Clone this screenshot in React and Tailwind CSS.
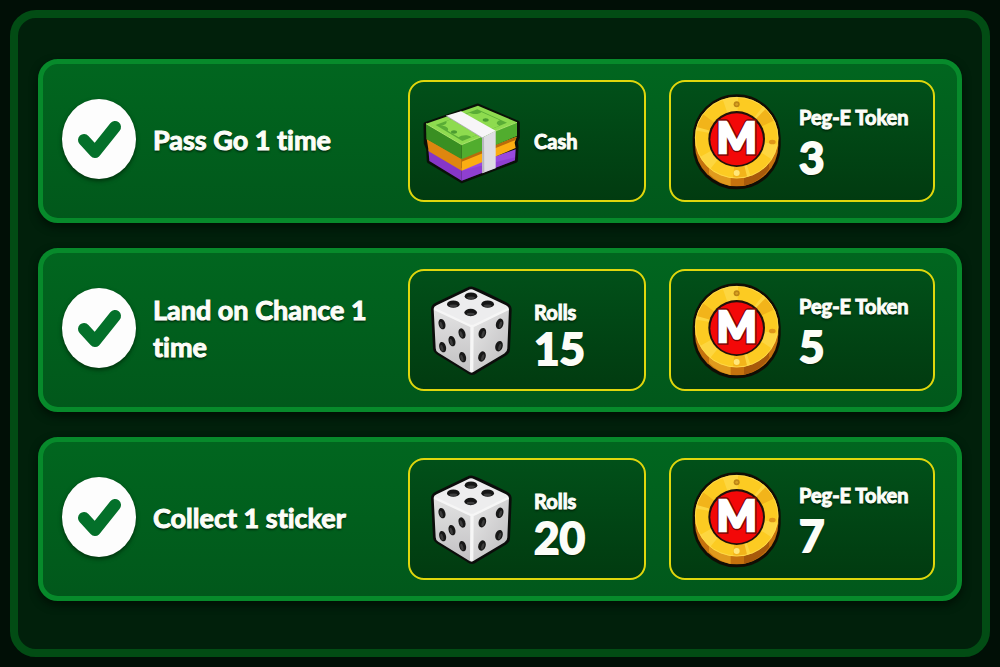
import React from 'react';

const TASKS = [
    { id: 'go', title: 'Pass Go 1 time', reward: { icon: CashIcon, label: 'Cash' }, tokens: 3 },
    { id: 'chance', title: 'Land on Chance 1 time', reward: { icon: DiceIcon, label: 'Rolls', amount: 15 }, tokens: 5 },
    { id: 'sticker', title: 'Collect 1 sticker', reward: { icon: DiceIcon, label: 'Rolls', amount: 20 }, tokens: 7 },
];

function CheckIcon() {
    return (
        <svg viewBox="0 0 74 84" className="w-[74px] h-[84px] shrink-0 overflow-visible drop-shadow-[0_2px_2px_rgba(0,20,0,0.6)]" role="img" aria-label="Completed">
            <ellipse cx="37" cy="40" rx="37" ry="40" fill="#fdfdfd" />
            <path d="M22 41 L33 53 L53 28" fill="none" stroke="#04702a" strokeWidth="12" strokeLinecap="round" strokeLinejoin="round" />
        </svg>
    );
}

function CashIcon() {
    return (
        <svg viewBox="42 30 288 246" className="w-24 h-[82px] overflow-visible" aria-hidden="true">
            <path d="M204 46 L324 98 L324 142 L318 154 L320 170 L318 212 L156 274 L56 214 L54 176 L47 160 L46 102 Z" fill="#091008" stroke="#091008" strokeWidth="11" strokeLinejoin="round" />
            {/* purple bundle */}
            <path d="M55 178 L155 235 L155 272 L58 213 Z" fill="#8636c7" />
            <path d="M155 235 L317 178 L315 211 L155 272 Z" fill="#9a49df" />
            <path d="M155 242 L155 272 L315 211 L315 202 Z" fill="#7a2fb8" opacity="0.35" />
            {/* orange bundle */}
            <path d="M50 146 L155 205 L155 242 L56 184 Z" fill="#df860f" />
            <path d="M155 205 L320 140 L314 158 L317 174 L155 242 Z" fill="#fbad12" />
            <path d="M155 205 L320 140 L317 150 L155 215 Z" fill="#b86b0b" />
            {/* green bundle */}
            <path d="M48 101 L155 164 L155 208 L49 147 Z" fill="#398f22" />
            <path d="M155 164 L321 97 L321 138 L155 208 Z" fill="#51ad2e" />
            <path d="M48 101 L204 47 L321 97 L155 164 Z" fill="#8edb4f" />
            <path d="M48 101 L155 164 L321 97" fill="none" stroke="#a9e66b" strokeWidth="3" />
            <path d="M77 105 L202 58 L291 98 L157 153 Z" fill="#5aad36" />
            <path d="M91 106 C107 106 112 99 109 93 L179 68 C188 74 207 74 214 66 L270 91 C257 95 258 103 268 107 L184 142 C175 133 153 135 146 142 L113 122 C119 115 107 108 91 106 Z" fill="#8edb4f" />
            <ellipse cx="132" cy="126" rx="9" ry="5" fill="#4c9c31" />
            <ellipse cx="227" cy="90" rx="9" ry="5" fill="#4c9c31" />
            {/* paper band */}
            <path d="M108 77 L153 64 L257 122 L216 143 Z" fill="#f7f5f8" />
            <path d="M108 77 L216 143" stroke="#9b9ba4" strokeWidth="2" />
            <path d="M216 143 L257 122 L257 235 L217 250 Z" fill="#dedce2" />
            <path d="M216 143 L222 140 L223 247 L217 250 Z" fill="#b8b7bf" />
        </svg>
    );
}

const TOP_PIPS = [[140, 48], [87, 72], [190, 72], [139, 97]];
const LEFT_PIPS = [[53, 132], [113, 160], [83, 183], [55, 201], [115, 231]];
const RIGHT_PIPS = [[226, 131], [174, 159], [224, 198], [173, 229]];

function DiceIcon() {
    return (
        <svg viewBox="20 18 246 266" className="w-[82px] h-[89px] overflow-visible" aria-hidden="true">
            <defs>
                <linearGradient id="dice-left" x1="0" y1="0" x2="0" y2="1">
                    <stop offset="0" stopColor="#e2e2e2" />
                    <stop offset="1" stopColor="#c2c1c3" />
                </linearGradient>
                <linearGradient id="dice-right" x1="0" y1="0" x2="1" y2="1">
                    <stop offset="0" stopColor="#e9e9e9" />
                    <stop offset="1" stopColor="#bdbcbe" />
                </linearGradient>
            </defs>
            <path d="M141 27 Q150 27 245 75 Q254 79 254 89 L249 207 Q249 214 240 220 L153 272 Q143 280 133 272 L42 216 Q34 211 34 203 L28 88 Q28 79 37 75 L131 30 Q136 27 141 27 Z" fill="#0b0d0b" stroke="#0b0d0b" strokeWidth="16" strokeLinejoin="round" />
            <path d="M28 86 L143 138 L142 277 Q137 277 132 273 L42 218 Q34 213 34 204 Z" fill="url(#dice-left)" />
            <path d="M143 138 L254 86 L249 205 Q249 214 240 220 L153 272 Q147 277 142 277 Z" fill="url(#dice-right)" />
            <path d="M28 86 Q28 79 37 75 L131 30 Q140 25 150 30 L245 75 Q254 79 254 87 L150 139 Q143 142 136 139 Z" fill="#ededee" />
            <path d="M30 86 L136 136 Q143 139 150 136 L252 86" fill="none" stroke="#f6f6f6" strokeWidth="7" strokeLinejoin="round" />
            <path d="M143 140 L142 272" stroke="#f6f6f6" strokeWidth="10" strokeLinecap="round" />
            {TOP_PIPS.map(([x, y]) => (
                <g key={`${x}-${y}`}>
                    <ellipse cx={x} cy={y} rx="19" ry="11" fill="#151515" />
                    <ellipse cx={x} cy={y + 5} rx="12" ry="4" fill="#3d3d3d" />
                </g>
            ))}
            {LEFT_PIPS.map(([x, y]) => (
                <g key={`${x}-${y}`} transform={`rotate(-17 ${x} ${y})`}>
                    <ellipse cx={x} cy={y} rx="10" ry="16" fill="#171717" />
                    <ellipse cx={x - 3} cy={y + 2} rx="4" ry="10" fill="#3d3d3d" />
                </g>
            ))}
            {RIGHT_PIPS.map(([x, y]) => (
                <g key={`${x}-${y}`} transform={`rotate(17 ${x} ${y})`}>
                    <ellipse cx={x} cy={y} rx="11" ry="16" fill="#171717" />
                    <ellipse cx={x + 3} cy={y + 2} rx="4" ry="10" fill="#3d3d3d" />
                </g>
            ))}
        </svg>
    );
}

function TokenIcon() {
    return (
        <svg viewBox="22 12 264 282" className="w-[88px] h-[94px] overflow-visible" aria-hidden="true">
            <path d="M26 143 A127 125 0 0 1 280 143 L280 168 A127 125 0 0 1 26 168 Z" fill="#100d04" stroke="#100d04" strokeWidth="10" />
            <path d="M28 143 L28 166 A125 123 0 0 0 278 166 L278 143 Z" fill="#c5720e" />
            <path d="M70 252 A125 123 0 0 0 135 288 L135 262 L70 232 Z" fill="#e09a1d" />
            <path d="M175 288 A125 123 0 0 0 250 236 L250 212 L175 258 Z" fill="#a85a0b" />
            <ellipse cx="153" cy="143" rx="125" ry="122" fill="#fccb22" />
            {/* facets round the rim, clockwise from three o'clock */}
            <ellipse cx="153" cy="143" rx="103" ry="100" fill="none" stroke="#fdd640" strokeWidth="42" pathLength="360" strokeDasharray="22 38" strokeDashoffset="-70" />
            <ellipse cx="153" cy="143" rx="103" ry="100" fill="none" stroke="#f2b41a" strokeWidth="42" pathLength="360" strokeDasharray="20 100" strokeDashoffset="-75" />
            <ellipse cx="153" cy="143" rx="124" ry="121" fill="none" stroke="#ffe15e" strokeWidth="2" />
            <circle cx="153" cy="43" r="9" fill="#bd8615" />
            <circle cx="153" cy="43" r="4" fill="#d8a323" />
            <ellipse cx="260" cy="156" rx="10" ry="7" fill="#de9619" />
            <circle cx="153" cy="249" r="9" fill="#ffe77a" />
            <ellipse cx="153" cy="147" rx="85" ry="84" fill="#21110a" />
            <ellipse cx="153" cy="148" rx="79" ry="78" fill="#f30808" />
            <text x="153" y="190" textAnchor="middle" className="[text-shadow:none]" fontFamily="Lato, sans-serif" fontWeight="900" fontSize="126" fill="#fff" stroke="#7c0604" strokeWidth="16" paintOrder="stroke">M</text>
            <text x="153" y="190" textAnchor="middle" className="[text-shadow:none]" fontFamily="Lato, sans-serif" fontWeight="900" fontSize="126" fill="#fff" stroke="#fff" strokeWidth="8" paintOrder="stroke">M</text>
        </svg>
    );
}

const REWARD_BOX = 'flex items-center gap-[14px] h-[122px] rounded-2xl border-2 border-[#e0d70d] bg-linear-to-b from-[#015019] to-[#013b10]';
const LABEL = 'text-xl leading-6 font-bold whitespace-nowrap [-webkit-text-stroke:1px_#fcfdf8]';
const AMOUNT = 'text-[44px] leading-10 font-bold [-webkit-text-stroke:2px_#fcfdf8]';

function TaskRow({ task }) {
    const Icon = task.reward.icon;

    return (
        <li className="grid grid-cols-[323fr_238fr_266fr] items-center gap-[23px] py-4 pl-[19px] pr-[22px] rounded-[20px] border-5 border-[#078a2b] bg-linear-to-b from-[#01661f] to-[#01581b] shadow-[0_4px_8px_rgba(0,8,0,0.7)]">
            <div className="flex items-center gap-[17px]">
                <CheckIcon />
                <h2 className="pb-1 text-[27px] leading-[37px] font-bold [-webkit-text-stroke:1px_#fcfdf8]">{task.title}</h2>
            </div>

            <div className={`${REWARD_BOX} px-[14px]`}>
                <div className="w-24 shrink-0 flex justify-center">
                    <Icon />
                </div>
                <div className={task.reward.amount ? 'pt-2' : ''}>
                    <div className={LABEL}>{task.reward.label}</div>
                    {task.reward.amount && <div className={`${AMOUNT} mt-1`}>{task.reward.amount}</div>}
                </div>
            </div>

            <div className={`${REWARD_BOX} px-[18px]`}>
                <div className="w-24 shrink-0 flex justify-center">
                    <TokenIcon />
                </div>
                <div>
                    <div className={LABEL}>Peg-E Token</div>
                    <div className={`${AMOUNT} mt-2`}>{task.tokens}</div>
                </div>
            </div>
        </li>
    );
}

export default function App() {
    return (
        <div className="min-h-screen flex p-[10px] bg-[#010f06] font-[Lato,sans-serif] text-[#fcfdf8] [font-variant-ligatures:none] [text-shadow:0_2px_2px_rgba(0,20,0,0.7)]">
            <main className="flex-1 rounded-[26px] border-8 border-[#024c14] bg-[#01200b] px-5 py-[41px]">
                <ul className="flex flex-col gap-[25px]">
                    {TASKS.map((task) => (
                        <TaskRow key={task.id} task={task} />
                    ))}
                </ul>
            </main>
        </div>
    );
}
